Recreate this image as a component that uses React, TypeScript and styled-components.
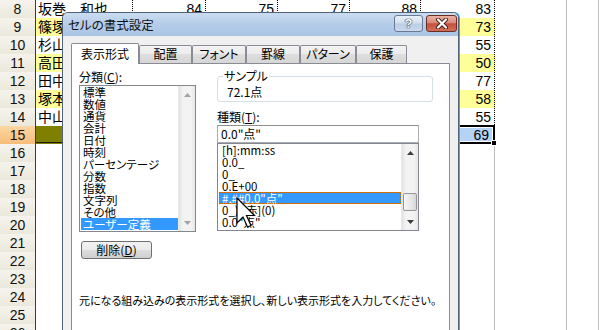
import React from "react";
import styled, { createGlobalStyle } from "styled-components";

const Global = createGlobalStyle`
  html, body { margin: 0; padding: 0; background: #fff; }
  body { width: 599px; height: 330px; overflow: hidden; font-family: "Noto Sans CJK JP", "Noto Sans", sans-serif; }
  #root { width: 599px; height: 330px; overflow: hidden; }
`;

const YELLOW = "#ffff99";
const OLIVE = "#808000";

const Stage = styled.div`
  position: relative;
  width: 599px;
  height: 330px;
  overflow: hidden;
  background: #fff;
`;

/* ---------------- spreadsheet ---------------- */

const Sheet = styled.div`
  display: flex;
  flex-direction: column;
`;

const Row = styled.div`
  display: grid;
  grid-template-columns: 36px 97px 73px 72px 72px 71px 74px 72px 1fr;
  height: 18px;
  flex: none;
`;

const RowHeader = styled.div<{ $active?: boolean }>`
  box-sizing: border-box;
  border-right: 1px solid #3a3a3a;
  border-bottom: 1px solid ${(p) => (p.$active ? "#2b3f7a" : "#bdb8a6")};
  background: ${(p) =>
    p.$active ? "linear-gradient(#fbd7a2, #f7bd79)" : "linear-gradient(#f5f3ec, #ebe8dc)"};
  font: 14px/17px "Liberation Sans", Arial, sans-serif;
  padding-top: 1px;
  color: #111;
  text-align: center;
`;

type Kind = "plain" | "table" | "total";

const Cell = styled.div<{ $kind: Kind; $fill?: string; $num?: boolean }>`
  box-sizing: border-box;
  min-width: 0;
  white-space: nowrap;
  overflow: hidden;
  border-right: ${(p) => (p.$kind === "plain" ? "1px solid #bdbdbd" : "1px dotted #000")};
  border-bottom: ${(p) =>
    p.$kind === "plain" ? "1px solid #bdbdbd" : p.$kind === "total" ? "3px double #1a1a1a" : "1px dotted #000"};
  background: ${(p) => p.$fill ?? "#fff"};
  padding: ${(p) => (p.$num ? "1px 3px 0 0" : "0 0 0 2px")};
  text-align: ${(p) => (p.$num ? "right" : "left")};
  font: ${(p) =>
    p.$num ? '14px/17px "Liberation Sans", Arial, sans-serif' : '14px/17px "Noto Sans CJK JP", sans-serif'};
  color: #000;
`;

const ActiveCell = styled.div`
  position: relative;
  box-sizing: border-box;
  border: 2px solid #000;
  margin-top: -1px;
  height: 19px;
  padding: 1px 1px 1px 0;
  &::after {
    content: "";
    position: absolute;
    right: -4px;
    bottom: -4px;
    width: 4px;
    height: 4px;
    background: #000;
    border: 1px solid #fff;
  }
`;

const Selected = styled.div`
  height: 100%;
  background: #b5d3f7;
  text-align: right;
  padding-right: 3px;
  font: 14px/15px "Liberation Sans", Arial, sans-serif;
  color: #000;
`;

interface SheetRow {
  n: number;
  kind: Kind;
  name?: string;
  nums?: (number | null)[];
  fill?: string;
}

const sheetRows: SheetRow[] = [
  { n: 8, kind: "table", name: "坂巻　和也", nums: [84, 75, 77, 88, 83] },
  { n: 9, kind: "table", name: "篠塚", nums: [null, null, null, null, 73], fill: YELLOW },
  { n: 10, kind: "table", name: "杉山", nums: [null, null, null, null, 55] },
  { n: 11, kind: "table", name: "高田", nums: [null, null, null, null, 50], fill: YELLOW },
  { n: 12, kind: "table", name: "田中", nums: [null, null, null, null, 77] },
  { n: 13, kind: "table", name: "塚本", nums: [null, null, null, null, 58], fill: YELLOW },
  { n: 14, kind: "table", name: "中山", nums: [null, null, null, null, 55] },
  { n: 15, kind: "total", nums: [null, null, null, null, 69], fill: OLIVE },
  ...Array.from({ length: 11 }, (_, i) => ({ n: 16 + i, kind: "plain" as Kind })),
];

function SheetView() {
  return (
    <Sheet>
      {sheetRows.map((r) => (
        <Row key={r.n}>
          <RowHeader $active={r.kind === "total"}>{r.n}</RowHeader>
          <Cell $kind={r.kind} $fill={r.fill}>
            {r.name ?? ""}
          </Cell>
          {[0, 1, 2, 3].map((i) => (
            <Cell key={i} $kind={r.kind} $fill={r.fill} $num>
              {r.nums?.[i] ?? ""}
            </Cell>
          ))}
          {r.kind === "total" ? (
            <ActiveCell>
              <Selected>{r.nums?.[4]}</Selected>
            </ActiveCell>
          ) : (
            <Cell $kind={r.kind} $fill={r.fill} $num>
              {r.nums?.[4] ?? ""}
            </Cell>
          )}
          <Cell $kind="plain" />
          <Cell $kind="plain" />
        </Row>
      ))}
    </Sheet>
  );
}

/* ---------------- dialog ---------------- */

const Dialog = styled.div`
  position: absolute;
  left: 62px;
  top: 12px;
  width: 397px;
  height: 330px;
  box-sizing: border-box;
  border: 1px solid #52627a;
  border-bottom: none;
  border-radius: 6px 6px 0 0;
  background: #f0f0f0;
  box-shadow: 1px 0 0 #2db3ea;
  display: flex;
  flex-direction: column;
  font-family: "Noto Sans CJK JP", sans-serif;
  font-feature-settings: "palt";
  color: #000;
`;

const TitleBar = styled.div`
  height: 23px;
  flex: none;
  display: flex;
  align-items: center;
  padding: 0 1px 0 5px;
  border-radius: 5px 5px 0 0;
  background: linear-gradient(#cadcf1, #b7cee9 45%, #a9c4e6);
`;

const Title = styled.div`
  flex: 1;
  font-size: 12.5px;
  line-height: 16px;
  color: #111;
`;

const CaptionButtons = styled.div`
  display: flex;
  gap: 3px;
  align-self: flex-start;
  margin-top: 2px;
`;

const HelpButton = styled.div`
  width: 29px;
  height: 17px;
  box-sizing: border-box;
  border: 1px solid #6a7b95;
  border-radius: 3px;
  background: linear-gradient(#e9f0f8, #d2dfee 48%, #bacde5 52%, #c9d9ee);
  display: flex;
  align-items: center;
  justify-content: center;
  font: bold 13px/15px "Liberation Sans", Arial, sans-serif;
  color: #fff;
  text-shadow: 0 0 1px #22324d, 0 0 1px #22324d, 0 0 1px #22324d;
`;

const CloseButton = styled.div`
  width: 31px;
  height: 17px;
  box-sizing: border-box;
  border: 1px solid #6d2b24;
  border-radius: 3px;
  background: linear-gradient(#eab1a4, #d98a78 45%, #c4513c 52%, #d26f58);
  display: flex;
  align-items: center;
  justify-content: center;
`;

const Client = styled.div`
  flex: 1;
  display: flex;
  flex-direction: column;
  padding: 7px 8px 0 8px;
  min-height: 0;
`;

const TabStrip = styled.div`
  display: flex;
  align-items: flex-end;
  height: 20px;
  flex: none;
`;

const Tab = styled.div<{ $active?: boolean; $w: number }>`
  position: relative;
  z-index: ${(p) => (p.$active ? 2 : 1)};
  width: ${(p) => p.$w}px;
  height: ${(p) => (p.$active ? 21 : 18)}px;
  margin-bottom: ${(p) => (p.$active ? -1 : 0)}px;
  box-sizing: border-box;
  border: 1px solid #898c95;
  border-bottom: none;
  border-radius: 2px 2px 0 0;
  background: ${(p) => (p.$active ? "#fff" : "linear-gradient(#f3f3f3, #ebebeb 50%, #dedede 50%, #d6d6d6)")};
  font-size: 12px;
  line-height: ${(p) => (p.$active ? 19 : 16)}px;
  text-align: center;
  color: #000;
`;

const TabPanel = styled.div`
  flex: 1;
  box-sizing: border-box;
  border: 1px solid #898c95;
  background: #fff;
  padding: 6px 0 0 7px;
  display: flex;
  flex-direction: column;
`;

const Columns = styled.div`
  display: flex;
  gap: 21px;
  align-items: flex-start;
`;

const LeftCol = styled.div`
  width: 117px;
  display: flex;
  flex-direction: column;
`;

const RightCol = styled.div`
  width: 216px;
  display: flex;
  flex-direction: column;
  margin-top: -1px;
`;

const FieldLabel = styled.div<{ $mt?: number }>`
  font-size: 12px;
  line-height: 14px;
  height: 14px;
  margin-top: ${(p) => p.$mt ?? 0}px;
  margin-bottom: 1px;
  u { text-decoration-thickness: 1px; text-underline-offset: 1px; }
`;

const ListBox = styled.div<{ $h: number; $w: number }>`
  width: ${(p) => p.$w}px;
  height: ${(p) => p.$h}px;
  box-sizing: border-box;
  border: 1px solid #828790;
  background: #fff;
  display: flex;
  overflow: hidden;
`;

const ListItems = styled.div<{ $pad: number }>`
  flex: 1;
  min-width: 0;
  display: flex;
  flex-direction: column;
  padding-left: 1px;
  font-size: 11.5px;
  line-height: 12px;
  white-space: nowrap;
  > div { padding-left: ${(p) => p.$pad}px; height: 12px; flex: none; }
`;

const ListItem = styled.div<{ $selected?: boolean; $focus?: boolean }>`
  background: ${(p) => (p.$selected ? "#3399ff" : "transparent")};
  color: ${(p) => (p.$selected ? "#fff" : "#000")};
  outline: ${(p) => (p.$focus ? "1px dotted #cc6600" : "none")};
  outline-offset: -1px;
`;

const ScrollBar = styled.div`
  width: 17px;
  flex: none;
  display: flex;
  flex-direction: column;
  background: linear-gradient(90deg, #e2e2e2, #f3f3f3 25%, #f3f3f3 75%, #e6e6e6);
  border-left: 1px solid #e9e9e9;
  box-sizing: border-box;
`;

const ArrowBox = styled.div`
  height: 17px;
  flex: none;
  display: flex;
  align-items: center;
  justify-content: center;
`;

const Track = styled.div`
  flex: 1;
  display: flex;
  flex-direction: column;
`;

const Thumb = styled.div<{ $top: number; $h: number }>`
  margin: ${(p) => p.$top}px 1px 0 1px;
  height: ${(p) => p.$h}px;
  box-sizing: border-box;
  border: 1px solid #979797;
  border-radius: 2px;
  background: linear-gradient(90deg, #f4f4f4, #e9e9e9 50%, #d8d8d8);
`;

const PushButton = styled.div`
  width: 71px;
  height: 18px;
  margin: 9px 0 0 2px;
  box-sizing: border-box;
  border: 1px solid #707070;
  border-radius: 3px;
  background: linear-gradient(#f2f2f2, #ebebeb 48%, #dddddd 52%, #cfcfcf);
  font-size: 12px;
  line-height: 16px;
  text-align: center;
  u { text-underline-offset: 1px; }
`;

const GroupBox = styled.fieldset`
  margin: 0;
  padding: 2px 8px 2px 8px;
  border: 1px solid #d5dfe5;
  border-radius: 3px;
  min-width: 0;
  legend {
    padding: 0 1px;
    margin-left: -3px;
    font-size: 12px;
    line-height: 14px;
  }
`;

const SampleValue = styled.div`
  font-size: 12px;
  line-height: 14px;
  padding-left: 1px;
`;

const TextBox = styled.div`
  width: 202px;
  height: 18px;
  box-sizing: border-box;
  border: 1px solid #abadb3;
  border-top-color: #8e8f8f;
  background: #fff;
  padding-left: 3px;
  font-size: 12px;
  line-height: 16px;
`;

const Hint = styled.div`
  margin-top: 34px;
  font-size: 11px;
  line-height: 14px;
  white-space: nowrap;
`;

const Pointer = styled.svg`
  position: absolute;
  left: 236px;
  top: 197px;
`;

const tabs: { label: string; w: number }[] = [
  { label: "表示形式", w: 68 },
  { label: "配置", w: 53 },
  { label: "フォント", w: 54 },
  { label: "罫線", w: 54 },
  { label: "パターン", w: 56 },
  { label: "保護", w: 51 },
];

const categories = [
  "標準",
  "数値",
  "通貨",
  "会計",
  "日付",
  "時刻",
  "パーセンテージ",
  "分数",
  "指数",
  "文字列",
  "その他",
  "ユーザー定義",
];

const formats = ["[h]:mm:ss", "0.0_", "0_", "0.E+00", '#,##0.0"点"', "0_);[赤](0)", '0.0"点"'];

const UpArrow = ({ color }: { color: string }) => (
  <svg width="7" height="4" viewBox="0 0 7 4">
    <path d="M0 4 L3.5 0 L7 4 Z" fill={color} />
  </svg>
);
const DownArrow = ({ color }: { color: string }) => (
  <svg width="7" height="4" viewBox="0 0 7 4">
    <path d="M0 0 L3.5 4 L7 0 Z" fill={color} />
  </svg>
);

export default function App() {
  return (
    <Stage>
      <Global />
      <SheetView />
      <Dialog>
        <TitleBar>
          <Title>セルの書式設定</Title>
          <CaptionButtons>
            <HelpButton>?</HelpButton>
            <CloseButton>
              <svg width="14" height="11" viewBox="0 0 14 11">
                <path d="M3 1.5 L11 9.5 M11 1.5 L3 9.5" stroke="#4a1a14" strokeWidth="4" strokeLinecap="round" />
                <path d="M3 1.5 L11 9.5 M11 1.5 L3 9.5" stroke="#fff" strokeWidth="2.2" strokeLinecap="round" />
              </svg>
            </CloseButton>
          </CaptionButtons>
        </TitleBar>
        <Client>
          <TabStrip>
            {tabs.map((t, i) => (
              <Tab key={t.label} $active={i === 0} $w={t.w}>
                {t.label}
              </Tab>
            ))}
          </TabStrip>
          <TabPanel>
            <Columns>
              <LeftCol>
                <FieldLabel>
                  分類(<u>C</u>):
                </FieldLabel>
                <ListBox $h={147} $w={117}>
                  <ListItems $pad={2}>
                    {categories.map((c, i) => (
                      <ListItem key={c} $selected={i === categories.length - 1}>
                        {c}
                      </ListItem>
                    ))}
                  </ListItems>
                  <ScrollBar>
                    <ArrowBox>
                      <UpArrow color="#a3a3a3" />
                    </ArrowBox>
                    <Track />
                    <ArrowBox>
                      <DownArrow color="#a3a3a3" />
                    </ArrowBox>
                  </ScrollBar>
                </ListBox>
                <PushButton>
                  削除(<u>D</u>)
                </PushButton>
              </LeftCol>
              <RightCol>
                <GroupBox>
                  <legend>サンプル</legend>
                  <SampleValue>72.1点</SampleValue>
                </GroupBox>
                <FieldLabel $mt={8}>
                  種類(<u>T</u>):
                </FieldLabel>
                <TextBox>0.0"点"</TextBox>
                <ListBox $h={88} $w={202}>
                  <ListItems $pad={3}>
                    {formats.map((f, i) => (
                      <ListItem key={f} $selected={i === 4} $focus={i === 4}>
                        {f}
                      </ListItem>
                    ))}
                  </ListItems>
                  <ScrollBar>
                    <ArrowBox>
                      <UpArrow color="#3c3c3c" />
                    </ArrowBox>
                    <Track>
                      <Thumb $top={32} $h={18} />
                    </Track>
                    <ArrowBox>
                      <DownArrow color="#3c3c3c" />
                    </ArrowBox>
                  </ScrollBar>
                </ListBox>
              </RightCol>
            </Columns>
            <Hint>元になる組み込みの表示形式を選択し、新しい表示形式を入力してください。</Hint>
          </TabPanel>
        </Client>
      </Dialog>
      <Pointer width="20" height="32" viewBox="0 0 20 32">
        <path
          d="M1 1 L1 26 L7 20 L11.5 30 L15 28.5 L10.5 18.5 L18.5 18.5 Z"
          fill="#fff"
          stroke="#000"
          strokeWidth="1.2"
          strokeLinejoin="miter"
        />
      </Pointer>
    </Stage>
  );
}
